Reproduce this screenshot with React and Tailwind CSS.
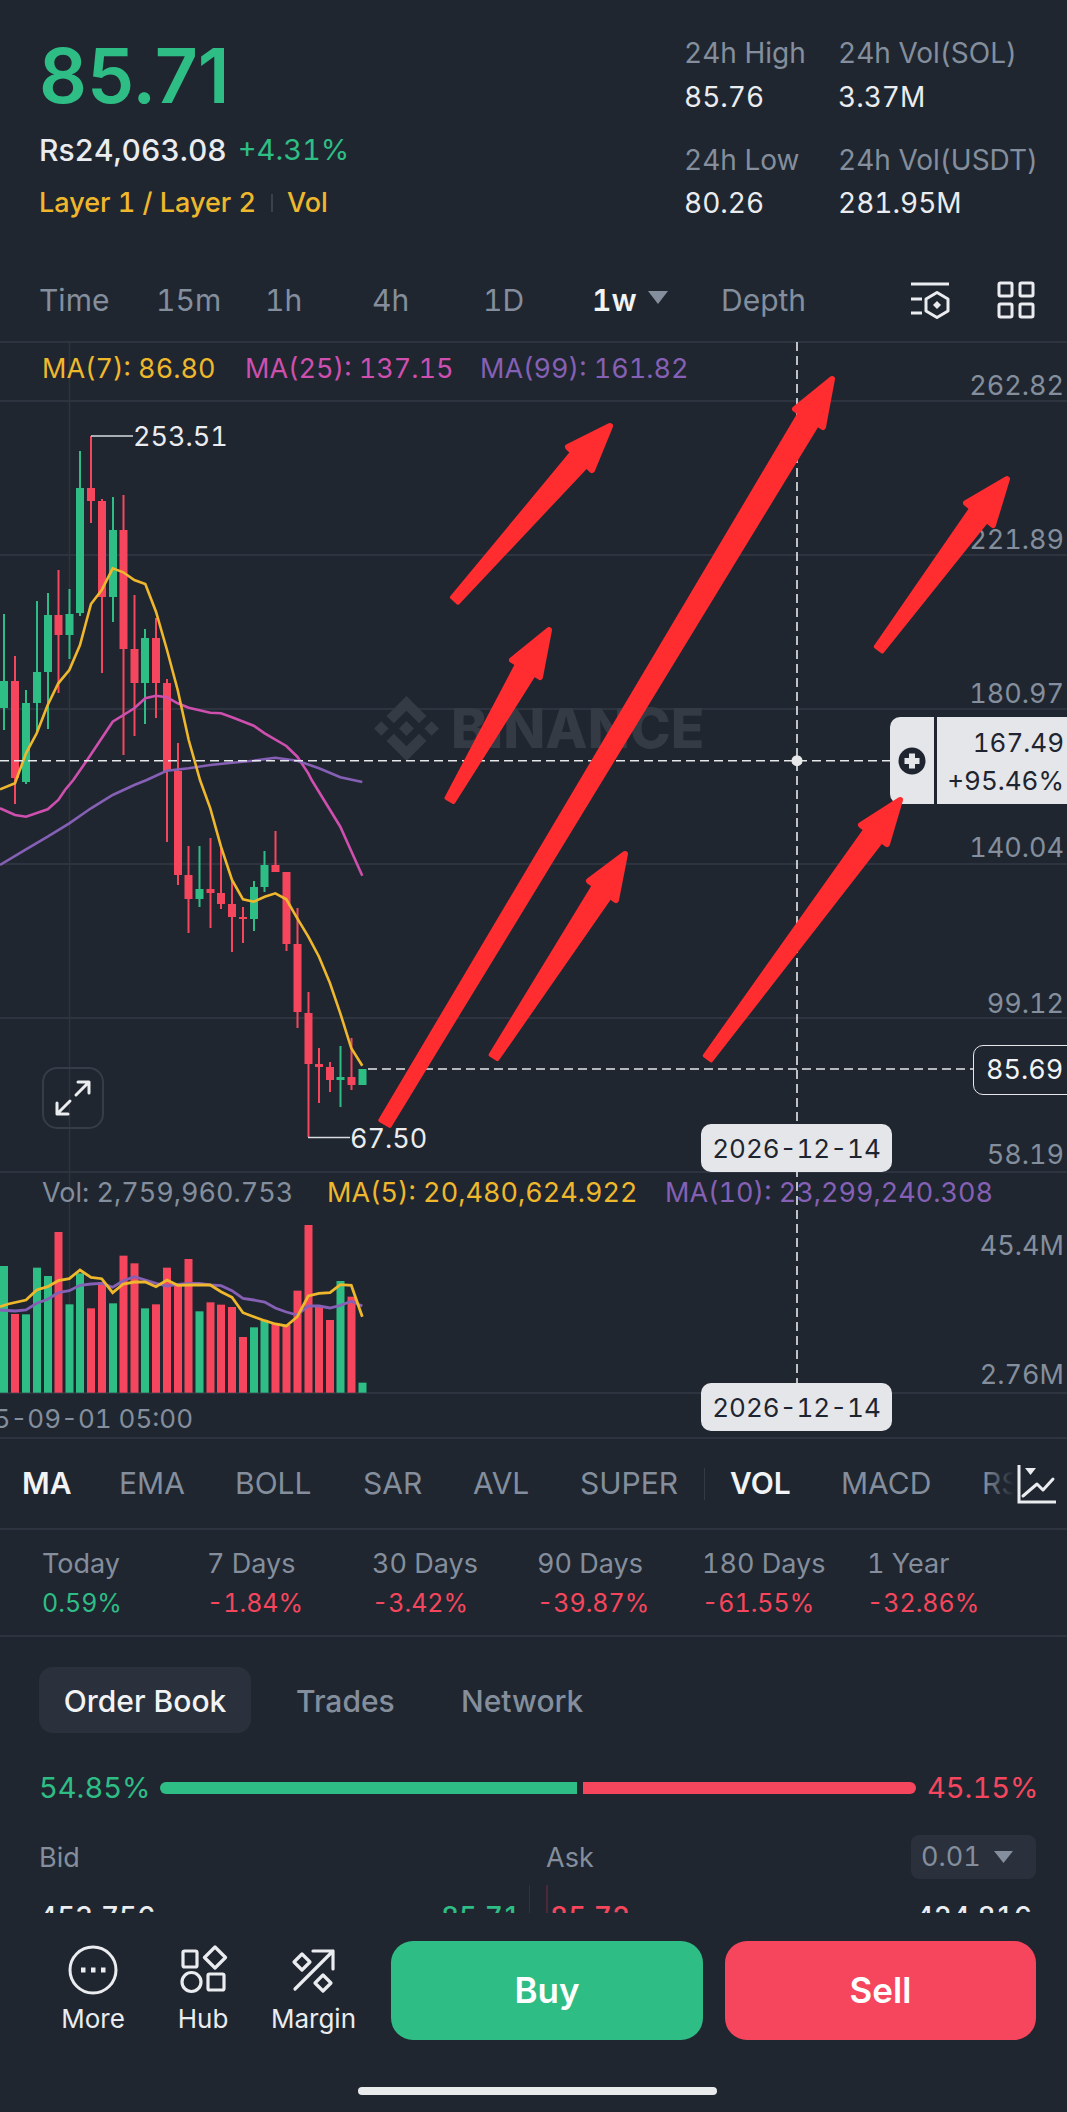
import React from "react";

const G = "#2EBD85";
const R = "#F6465D";
const Y = "#EFB82C";
const M = "#CE4FAE";
const P = "#8560B5";

// [cx, dir, wickTop, wickBottom, bodyTop, bodyBottom]
const candles = [
  [4,1,614,730,681,708],[15,0,656,804,681,778],[26,1,690,784,703,782],[37,1,601,733,672,703],
  [48,1,593,729,615,672],[58.5,0,570,693,615,635],[69.5,1,589,659,614,635],[80,1,451,616,488,613],
  [91,0,436,523,488,501],[102,0,499,673,501,597],[113,1,497,622,530,597],[123.5,0,495,755,530,649],
  [134.5,0,595,736,649,683],[145,1,629,724,638,683],[156,0,618,718,638,683],[167,0,679,842,683,771],
  [178,0,743,885,771,875],[188.5,0,846,933,875,899],[199.5,1,846,907,889,899],[210.5,0,838,928,889,893],
  [221,0,847,909,893,904],[232,0,880,952,904,917],[243,0,907,943,917,919],[254,1,881,931,887,919],
  [264.5,1,851,892,865,887],[275.5,0,831,872,865,872],[286.5,0,872,951,872,944],[297.5,0,908,1028,944,1012],
  [308.5,0,992,1137,1013,1064],[319,0,1048,1103,1064,1067],[330,0,1062,1092,1067,1080],[340.5,1,1046,1107,1077,1080],
  [351.5,0,1038,1090,1077,1085],[362.5,1,1069,1085,1069,1085],
];

const volTops = [288,432,433,293,318,186,403,310,415,336,400,257,280,415,403,293,345,267,424,397,404,411,501,472,452,460,465,362,165,410,450,333,380,638];

const z2 = (a) => a.map(([x, y]) => `${(x / 3).toFixed(1)},${(340 + y / 3).toFixed(1)}`).join(" ");
const z3 = (a) => a.map(([x, y]) => `${(x / 3).toFixed(1)},${(780 + y / 3).toFixed(1)}`).join(" ");
const z4 = (a) => a.map(([x, y]) => `${(x / 3).toFixed(1)},${(1170 + y / 3).toFixed(1)}`).join(" ");

const ma7 = z2([[0,1348],[45,1330],[78,1240],[110,1180],[143,1095],[175,1030],[208,990],[240,915],[273,792],[305,750],[338,685],[370,697],[403,720],[436,732],[468,815],[501,930],[533,1050],[566,1200],[600,1320]]) + " " +
  z3([[631,85],[663,200],[696,300],[729,358],[761,365],[794,350],[826,340],[859,358],[892,415],[925,470],[957,530],[990,610],[1021,700],[1054,805],[1087,857]]);
const ma25a = z3([[0,85],[45,105],[78,110],[143,88],[175,60],[195,30],[220,0]]) + " " +
  z2([[260,1262],[338,1145],[403,1105],[436,1075],[468,1067],[501,1072],[533,1090],[566,1103],[631,1118],[663,1120],[696,1132],[761,1157],[794,1180],[859,1218],[892,1250],[925,1300]]) + " " +
  z3([[935,0],[1021,140],[1087,287]]);
const ma99 = z3([[0,255],[78,208],[143,170],[208,130],[273,85],[338,45],[403,15],[440,0]]) + " " +
  z2([[500,1292],[566,1285],[631,1275],[696,1268],[761,1262],[826,1253],[892,1262],[957,1285],[1021,1312],[1087,1326]]);
const vol5 = z4([[0,410],[25,402],[78,390],[110,360],[143,350],[175,332],[208,326],[240,300],[273,322],[305,326],[338,368],[370,342],[403,336],[436,336],[468,350],[501,330],[533,346],[566,345],[631,345],[663,365],[696,382],[729,428],[761,440],[794,452],[826,462],[859,468],[892,440],[925,378],[957,370],[990,368],[1021,344],[1054,346],[1087,440]]);
const vol10 = z4([[0,420],[45,423],[78,420],[110,400],[143,388],[175,368],[208,362],[240,346],[273,342],[305,340],[338,352],[370,332],[403,320],[436,330],[468,340],[501,348],[533,343],[566,340],[598,340],[631,345],[663,347],[696,362],[729,385],[761,390],[794,396],[826,414],[859,426],[892,435],[925,408],[957,408],[990,414],[1021,406],[1054,394],[1087,408]]);

const arrows = [
  { tail: [385,1123], tip: [832,379], c1: [795,409], c2: [823,427], w1: 11, w2: 21 },
  { tail: [455,600], tip: [610,426], c1: [568,447], c2: [592,470], w1: 8, w2: 20 },
  { tail: [879,649], tip: [1007,479], c1: [966,503], c2: [993,525], w1: 8, w2: 20 },
  { tail: [450,800], tip: [549,630], c1: [512,660], c2: [540,677], w1: 8, w2: 20 },
  { tail: [494,1057], tip: [625,854], c1: [589,881], c2: [616,900], w1: 8, w2: 20 },
  { tail: [708,1058], tip: [900,800], c1: [861,825], c2: [887,844], w1: 8, w2: 20 },
];

function Arrow({ a }) {
  const nx = (a.c1[0] + a.c2[0]) / 2, ny = (a.c1[1] + a.c2[1]) / 2;
  const dx = nx - a.tail[0], dy = ny - a.tail[1];
  const len = Math.hypot(dx, dy);
  const ux = -dy / len, uy = dx / len;
  const pts = [
    [a.tail[0] + ux * a.w1 / 2, a.tail[1] + uy * a.w1 / 2],
    [nx + ux * a.w2 / 2, ny + uy * a.w2 / 2],
    [nx - ux * a.w2 / 2, ny - uy * a.w2 / 2],
    [a.tail[0] - ux * a.w1 / 2, a.tail[1] - uy * a.w1 / 2],
  ].map((p) => p.join(",")).join(" ");
  return (
    <g fill="#FF2C30" stroke="#FF2C30" strokeLinejoin="round">
      <polygon points={pts} strokeWidth="4" />
      <polygon points={`${a.tip.join(",")} ${a.c1.join(",")} ${a.c2.join(",")}`} strokeWidth="6" />
    </g>
  );
}

function ChartDrawing() {
  const grid = [401, 555, 709, 864, 1018, 1172, 1393];
  return (
    <svg className="absolute inset-0" width="1067" height="1100" viewBox="0 338 1067 1100">
      <line x1="0" x2="1067" y1="342" y2="342" stroke="#2D343F" strokeWidth="2" />
      {grid.map((y) => (
        <line key={y} x1="0" x2="1067" y1={y} y2={y} stroke="#2D343F" strokeWidth="2" />
      ))}
      <line x1="69.5" x2="69.5" y1="342" y2="1393" stroke="#2D343F" strokeWidth="1.5" />
      <g transform="translate(374 696) scale(2.03)" fill="#343B45">
        <path d="M9.79 13.45 16 7.24l6.21 6.21 3.62-3.61L16 0 6.17 9.83l3.62 3.62zM0 16l3.61-3.62L7.23 16l-3.62 3.62L0 16zm9.79 2.55L16 24.76l6.21-6.21 3.62 3.61L16 32l-9.83-9.83 3.62-3.62zM24.77 16l3.62-3.62L32 16l-3.61 3.62L24.77 16zM19.67 16 16 12.33 13.29 15.04l-.31.31-.64.65L16 19.67 19.67 16z" />
      </g>
      {candles.map(([cx, dir, wt, wb, bt, bb], i) => (
        <g key={i} fill={dir ? G : R}>
          <rect x={cx - 1} y={wt} width="2" height={wb - wt} />
          <rect x={cx - 4} y={bt} width="8" height={Math.max(bb - bt, 2)} />
        </g>
      ))}
      <line x1="91" x2="133" y1="436" y2="436" stroke="#D8DBE0" strokeWidth="1.5" />
      <line x1="308" x2="350" y1="1137.5" y2="1137.5" stroke="#D8DBE0" strokeWidth="1.5" />
      <polyline points={ma25a} fill="none" stroke={M} strokeWidth="2.6" />
      <polyline points={ma99} fill="none" stroke={P} strokeWidth="2.6" />
      <polyline points={ma7} fill="none" stroke={Y} strokeWidth="2.6" />
      {candles.map(([cx, dir], i) => (
        <rect key={i} x={cx - 4} y={1170 + volTops[i] / 3} width="8" height={1392.7 - (1170 + volTops[i] / 3)} fill={dir ? G : R} />
      ))}
      <polyline points={vol10} fill="none" stroke={P} strokeWidth="2.8" />
      <polyline points={vol5} fill="none" stroke={Y} strokeWidth="2.8" />
    </svg>
  );
}

function Crosshair() {
  return (
    <svg className="absolute inset-0" width="1067" height="1100" viewBox="0 338 1067 1100">
      <line x1="0" x2="890" y1="760.7" y2="760.7" stroke="#E6E8EA" strokeWidth="1.6" strokeDasharray="9 5" />
      <line x1="368" x2="974" y1="1069" y2="1069" stroke="#E6E8EA" strokeWidth="1.6" strokeDasharray="9 5" />
      <line x1="797" x2="797" y1="342" y2="1384" stroke="#E6E8EA" strokeWidth="1.6" strokeDasharray="9 5" />
      <circle cx="797" cy="760.7" r="5.5" fill="#E6E8EA" />
    </svg>
  );
}

function Arrows() {
  return (
    <svg className="absolute inset-0 pointer-events-none" width="1067" height="1100" viewBox="0 338 1067 1100">
      {arrows.map((a, i) => <Arrow key={i} a={a} />)}
    </svg>
  );
}

function Chart() {
  const label = "absolute right-[3px] text-[27px] leading-[34px] text-[#848E9C]";
  return (
    <div className="relative h-[1099px] w-full">
      <ChartDrawing />
      <div className="absolute left-[42px] top-[14px] flex text-[27px] leading-[34px]">
        <span className="w-[203px] text-[#EFB82C]">MA(7): 86.80</span>
        <span className="w-[235px] text-[#CE4FAE]">MA(25): 137.15</span>
        <span className="text-[#8560B5]">MA(99): 161.82</span>
      </div>
      <div className="absolute left-[451px] top-[360px] text-[55px] font-extrabold leading-[60px] text-[#343B45]">BINANCE</div>
      <span className="absolute left-[133px] top-[82px] text-[27px] leading-[34px] text-[#EAECEF]">253.51</span>
      <span className="absolute left-[350px] top-[784px] text-[27px] leading-[34px] text-[#EAECEF]">67.50</span>
      <span className={label + " top-[31px]"}>262.82</span>
      <span className={label + " top-[185px]"}>221.89</span>
      <span className={label + " top-[339px]"}>180.97</span>
      <span className={label + " top-[493px]"}>140.04</span>
      <span className={label + " top-[649px]"}>99.12</span>
      <span className={label + " top-[800px]"}>58.19</span>
      <span className={label + " top-[891px]"}>45.4M</span>
      <span className={label + " top-[1020px]"}>2.76M</span>
      <div className="absolute left-[42px] top-[838px] flex text-[27px] leading-[34px]">
        <span className="w-[285px] text-[#848E9C]">Vol: 2,759,960.753</span>
        <span className="w-[338px] text-[#EFB82C]">MA(5): 20,480,624.922</span>
        <span className="text-[#8560B5]">MA(10): 23,299,240.308</span>
      </div>
      <span className="absolute right-[874px] top-[1064px] whitespace-nowrap text-[26px] leading-[34px] text-[#848E9C]">2025-09-01 05:00</span>
      <div className="absolute left-[42px] top-[729px] flex h-[62px] w-[62px] items-center justify-center rounded-[15px] border-2 border-[#363D49]">
        <svg width="42" height="42" viewBox="0 0 42 42" fill="none" stroke="#EAECEF" strokeWidth="3" strokeLinecap="round" strokeLinejoin="round">
          <path d="M24 18 L37 5 M26 5 H37 V16" />
          <path d="M18 24 L5 37 M5 26 V37 H16" />
        </svg>
      </div>
      <Crosshair />
      <div className="absolute left-[890px] top-[379px] flex h-[87px] w-[177px] text-[#1E2530]">
        <div className="flex w-[44px] items-center justify-center rounded-l-[10px] bg-[#E4E6E9]">
          <svg width="28" height="28" viewBox="0 0 28 28">
            <circle cx="14" cy="14" r="13.5" fill="#1E2530" />
            <path d="M11 6.5h6v4.5h4.5v6H17v4.5h-6V17H6.5v-6H11z" fill="#E4E6E9" />
          </svg>
        </div>
        <div className="ml-[3px] flex flex-1 flex-col items-end justify-center bg-[#E4E6E9] pr-[3px] pt-[2px] text-[26px] leading-[38px]">
          <span>167.49</span>
          <span>+95.46%</span>
        </div>
      </div>
      <div className="absolute left-[973px] top-[707px] flex h-[50px] w-[100px] items-center rounded-l-[10px] border border-[#E6E8EA] bg-[#1F2630] pl-[12px] text-[27px] text-[#F2F3F5]">85.69</div>
      <div className="absolute left-[701px] top-[786px] flex h-[48px] w-[191px] items-center justify-center rounded-[10px] bg-[#E4E6E9] text-[26px] text-[#1E2530]">2026-12-14</div>
      <div className="absolute left-[701px] top-[1045px] flex h-[48px] w-[191px] items-center justify-center rounded-[10px] bg-[#E4E6E9] text-[26px] text-[#1E2530]">2026-12-14</div>
      <Arrows />
    </div>
  );
}

function Stat({ label, value, red }) {
  return (
    <div>
      <div className="text-[27px] leading-[36px] text-[#848E9C]">{label}</div>
      <div className={"mt-[4px] text-[25px] leading-[34px] " + (red ? "text-[#F6465D]" : "text-[#2EBD85]")}>{value}</div>
    </div>
  );
}

function NavItem({ label, children, w }) {
  return (
    <div className={"flex flex-col items-center pt-[4px] " + w}>
      {children}
      <span className="mt-[7px] text-[26px] leading-[34px] text-[#EAECEF]">{label}</span>
    </div>
  );
}

export default function App() {
  return (
    <div className="h-[2112px] w-[1067px] overflow-hidden bg-[#1F2630] text-[#EAECEF] tabular-nums" style={{ fontFamily: "Inter, 'Noto Sans', sans-serif" }}>
      {/* Header */}
      <div className="flex h-[262px] justify-between pl-[39px] pr-[21px] pt-[36px]">
        <div>
          <div className="text-[75px] font-semibold normal-nums leading-[80px] text-[#2EBD85]">85.71</div>
          <div className="mt-[14px] flex items-center gap-[11px] text-[30px] font-medium leading-[40px]">
            <span>Rs24,063.08</span>
            <span className="text-[29px] font-normal text-[#2EBD85]">+4.31%</span>
          </div>
          <div className="mt-[13px] flex items-center text-[27px] font-medium leading-[40px] text-[#EFB82C]">
            <span>Layer 1 / Layer 2</span>
            <span className="ml-[15px] mr-[14px] h-[18px] w-[2px] bg-[#3A414D]" />
            <span>Vol</span>
          </div>
        </div>
        <div className="grid grid-cols-[154px_208px] text-[28px] leading-[34px]">
          <div>
            <div className="text-[#848E9C]">24h High</div>
            <div className="mt-[10px]">85.76</div>
          </div>
          <div>
            <div className="text-[#848E9C]">24h Vol(SOL)</div>
            <div className="mt-[10px]">3.37M</div>
          </div>
          <div className="mt-[-13px]">
            <div className="text-[#848E9C]">24h Low</div>
            <div className="mt-[9px]">80.26</div>
          </div>
          <div className="mt-[-13px]">
            <div className="text-[#848E9C]">24h Vol(USDT)</div>
            <div className="mt-[9px]">281.95M</div>
          </div>
        </div>
      </div>

      {/* Interval tabs */}
      <div className="flex h-[76px] items-center pl-[39px] text-[30px] text-[#848E9C]">
        <span className="w-[117px]">Time</span>
        <span className="w-[109px]">15m</span>
        <span className="w-[107px]">1h</span>
        <span className="w-[111px]">4h</span>
        <span className="w-[109px]">1D</span>
        <span className="flex w-[129px] items-center font-semibold text-[#F2F3F5]">
          1w
          <svg className="ml-[11px] mt-[-6px]" width="20" height="13" viewBox="0 0 20 13"><path d="M0 0h20L10 13z" fill="#848E9C" /></svg>
        </span>
        <span className="w-[189px]">Depth</span>
        <svg width="40" height="40" viewBox="910 280 40 40" fill="none" stroke="#EAECEF" strokeWidth="3">
          <path d="M911 284h38M911 299h11M911 313h11" />
          <path d="M937 292.500l11 6.500v12l-11 6.500-11-6.500v-12z" strokeLinejoin="round" />
          <path d="M937 301l4 4-4 4-4-4z" fill="#EAECEF" stroke="none" />
        </svg>
        <svg className="ml-[47px]" width="38" height="38" viewBox="996 280 38 38" fill="none" stroke="#EAECEF" strokeWidth="3">
          <rect x="998" y="282" width="13" height="13" rx="1.5" />
          <rect x="1019" y="282" width="13" height="13" rx="1.5" />
          <rect x="998" y="303" width="13" height="13" rx="1.5" />
          <rect x="1019" y="303" width="13" height="13" rx="1.5" />
        </svg>
      </div>

      <Chart />

      {/* Indicators */}
      <div className="relative flex h-[93px] items-center overflow-hidden border-y-2 border-[#2D343F] pl-[22px] text-[30px] text-[#848E9C]">
        <span className="w-[97px] font-semibold text-[#F2F3F5]">MA</span>
        <span className="w-[116px]">EMA</span>
        <span className="w-[128px]">BOLL</span>
        <span className="w-[110px]">SAR</span>
        <span className="w-[107px]">AVL</span>
        <span className="w-[124px]">SUPER</span>
        <span className="mr-[25px] h-[32px] w-px bg-[#333A45]" />
        <span className="w-[111px] font-semibold text-[#F2F3F5]">VOL</span>
        <span className="w-[141px]">MACD</span>
        <span>RSI</span>
        <div className="absolute right-0 top-0 h-full w-[82px] bg-gradient-to-r from-transparent to-[#1F2630] to-[35%]" />
        <svg className="absolute left-[1017px] top-[26px]" width="42" height="40" viewBox="1017 1464 42 40" fill="none" stroke="#EAECEF" strokeWidth="3">
          <path d="M1019 1464v37h37" />
          <path d="M1023 1495l14-12 6 6 10-11" strokeLinecap="round" strokeLinejoin="round" />
          <path d="M1025 1467h11l-5.500 7z" fill="#EAECEF" stroke="none" />
        </svg>
      </div>

      {/* Stats */}
      <div className="grid h-[107px] grid-cols-[repeat(6,165px)] border-b-2 border-[#2D343F] pl-[42px] pt-[16px]">
        <Stat label="Today" value="0.59%" />
        <Stat label="7 Days" value="-1.84%" red />
        <Stat label="30 Days" value="-3.42%" red />
        <Stat label="90 Days" value="-39.87%" red />
        <Stat label="180 Days" value="-61.55%" red />
        <Stat label="1 Year" value="-32.86%" red />
      </div>

      {/* Book tabs */}
      <div className="mt-[30px] flex items-center pl-[39px] text-[30px] text-[#848E9C]">
        <span className="flex h-[66px] w-[212px] items-center justify-center rounded-[14px] bg-[#2A313C] pt-[2px] font-medium text-[#F2F3F5]">Order Book</span>
        <span className="ml-[45px] w-[165px] pt-[2px] font-medium">Trades</span>
        <span className="pt-[2px] font-medium">Network</span>
      </div>

      {/* Ratio */}
      <div className="mt-[35px] flex h-[40px] items-center pl-[39px] text-[29px]">
        <span className="w-[121px] text-[#2EBD85]">54.85%</span>
        <span className="h-[12px] w-[417px] rounded-l-full bg-[#2EBD85]" />
        <span className="ml-[6px] h-[12px] w-[333px] rounded-r-full bg-[#F6465D]" />
        <span className="ml-[11px] text-[#F6465D]">45.15%</span>
      </div>

      {/* Bid / Ask */}
      <div className="mt-[27px] flex h-[44px] items-center pl-[39px] text-[27px] text-[#848E9C]">
        <span className="w-[507px] pt-[2px]">Bid</span>
        <span className="w-[365px] pt-[2px]">Ask</span>
        <span className="flex h-[44px] w-[125px] items-center justify-between rounded-[8px] bg-[#2A313C] pl-[10px] pr-[23px]">
          0.01
          <svg width="19" height="12" viewBox="0 0 19 12"><path d="M0 0h19L9.500 12z" fill="#848E9C" /></svg>
        </span>
      </div>

      {/* Clipped order row */}
      <div className="relative mt-[6px] flex h-[28px] overflow-hidden pl-[39px] text-[28px] font-medium leading-[34px]">
        <span className="absolute left-[529px] top-0 h-full w-px bg-[#2D343F]" />
        <span className="absolute left-[546px] top-0 h-full w-[2px] bg-[#4A2A38]" />
        <span className="mt-[15px] w-[370px] text-[#EAECEF]">453,756</span>
        <span className="mt-[15px] w-[112px] text-right text-[#2EBD85]">85.71</span>
        <span className="ml-[29px] mt-[15px] w-[300px] text-[#F6465D]">85.72</span>
        <span className="mt-[15px] w-[182px] text-right text-[#EAECEF]">424,816</span>
      </div>

      {/* Bottom bar */}
      <div className="mt-[28px] flex h-[99px] pl-[38px]">
        <div className="flex w-[331px]">
          <NavItem label="More" w="w-[110px]">
            <svg width="50" height="50" viewBox="68 1945 50 50" fill="none" stroke="#EAECEF" strokeWidth="3">
              <circle cx="93" cy="1970" r="23" />
              <path d="M81 1970h4.500M91 1970h4.500M101 1970h4.500" strokeWidth="5" />
            </svg>
          </NavItem>
          <NavItem label="Hub" w="w-[110px]">
            <svg width="50" height="50" viewBox="178 1945 50 50" fill="none" stroke="#EAECEF" strokeWidth="3.2">
              <rect x="183" y="1951" width="14" height="16" rx="1.5" />
              <path d="M215 1947l10.500 10.500-10.500 10.500-10.500-10.500z" strokeLinejoin="round" />
              <circle cx="191.500" cy="1982" r="9.500" />
              <rect x="208" y="1974" width="16" height="16" rx="1.5" />
            </svg>
          </NavItem>
          <NavItem label="Margin" w="w-[111px]">
            <svg width="50" height="50" viewBox="289 1945 50 50" fill="none" stroke="#EAECEF" strokeWidth="3.2" strokeLinecap="round" strokeLinejoin="round">
              <path d="M295 1989l38-38M313 1951h20v18" />
              <path d="M302 1954l8 8-8 8-8-8z" />
              <path d="M323 1975l8 8-8 8-8-8z" />
            </svg>
          </NavItem>
        </div>
        <div className="ml-[22px] flex h-[99px] w-[312px] items-center justify-center rounded-[22px] bg-[#2EBD85] text-[35px] font-semibold text-white">Buy</div>
        <div className="ml-[22px] flex h-[99px] w-[311px] items-center justify-center rounded-[22px] bg-[#F6465D] text-[35px] font-semibold text-white">Sell</div>
      </div>

      <div className="ml-[358px] mt-[47px] h-[8px] w-[359px] rounded-full bg-[#E9EAEC]" />
    </div>
  );
}
